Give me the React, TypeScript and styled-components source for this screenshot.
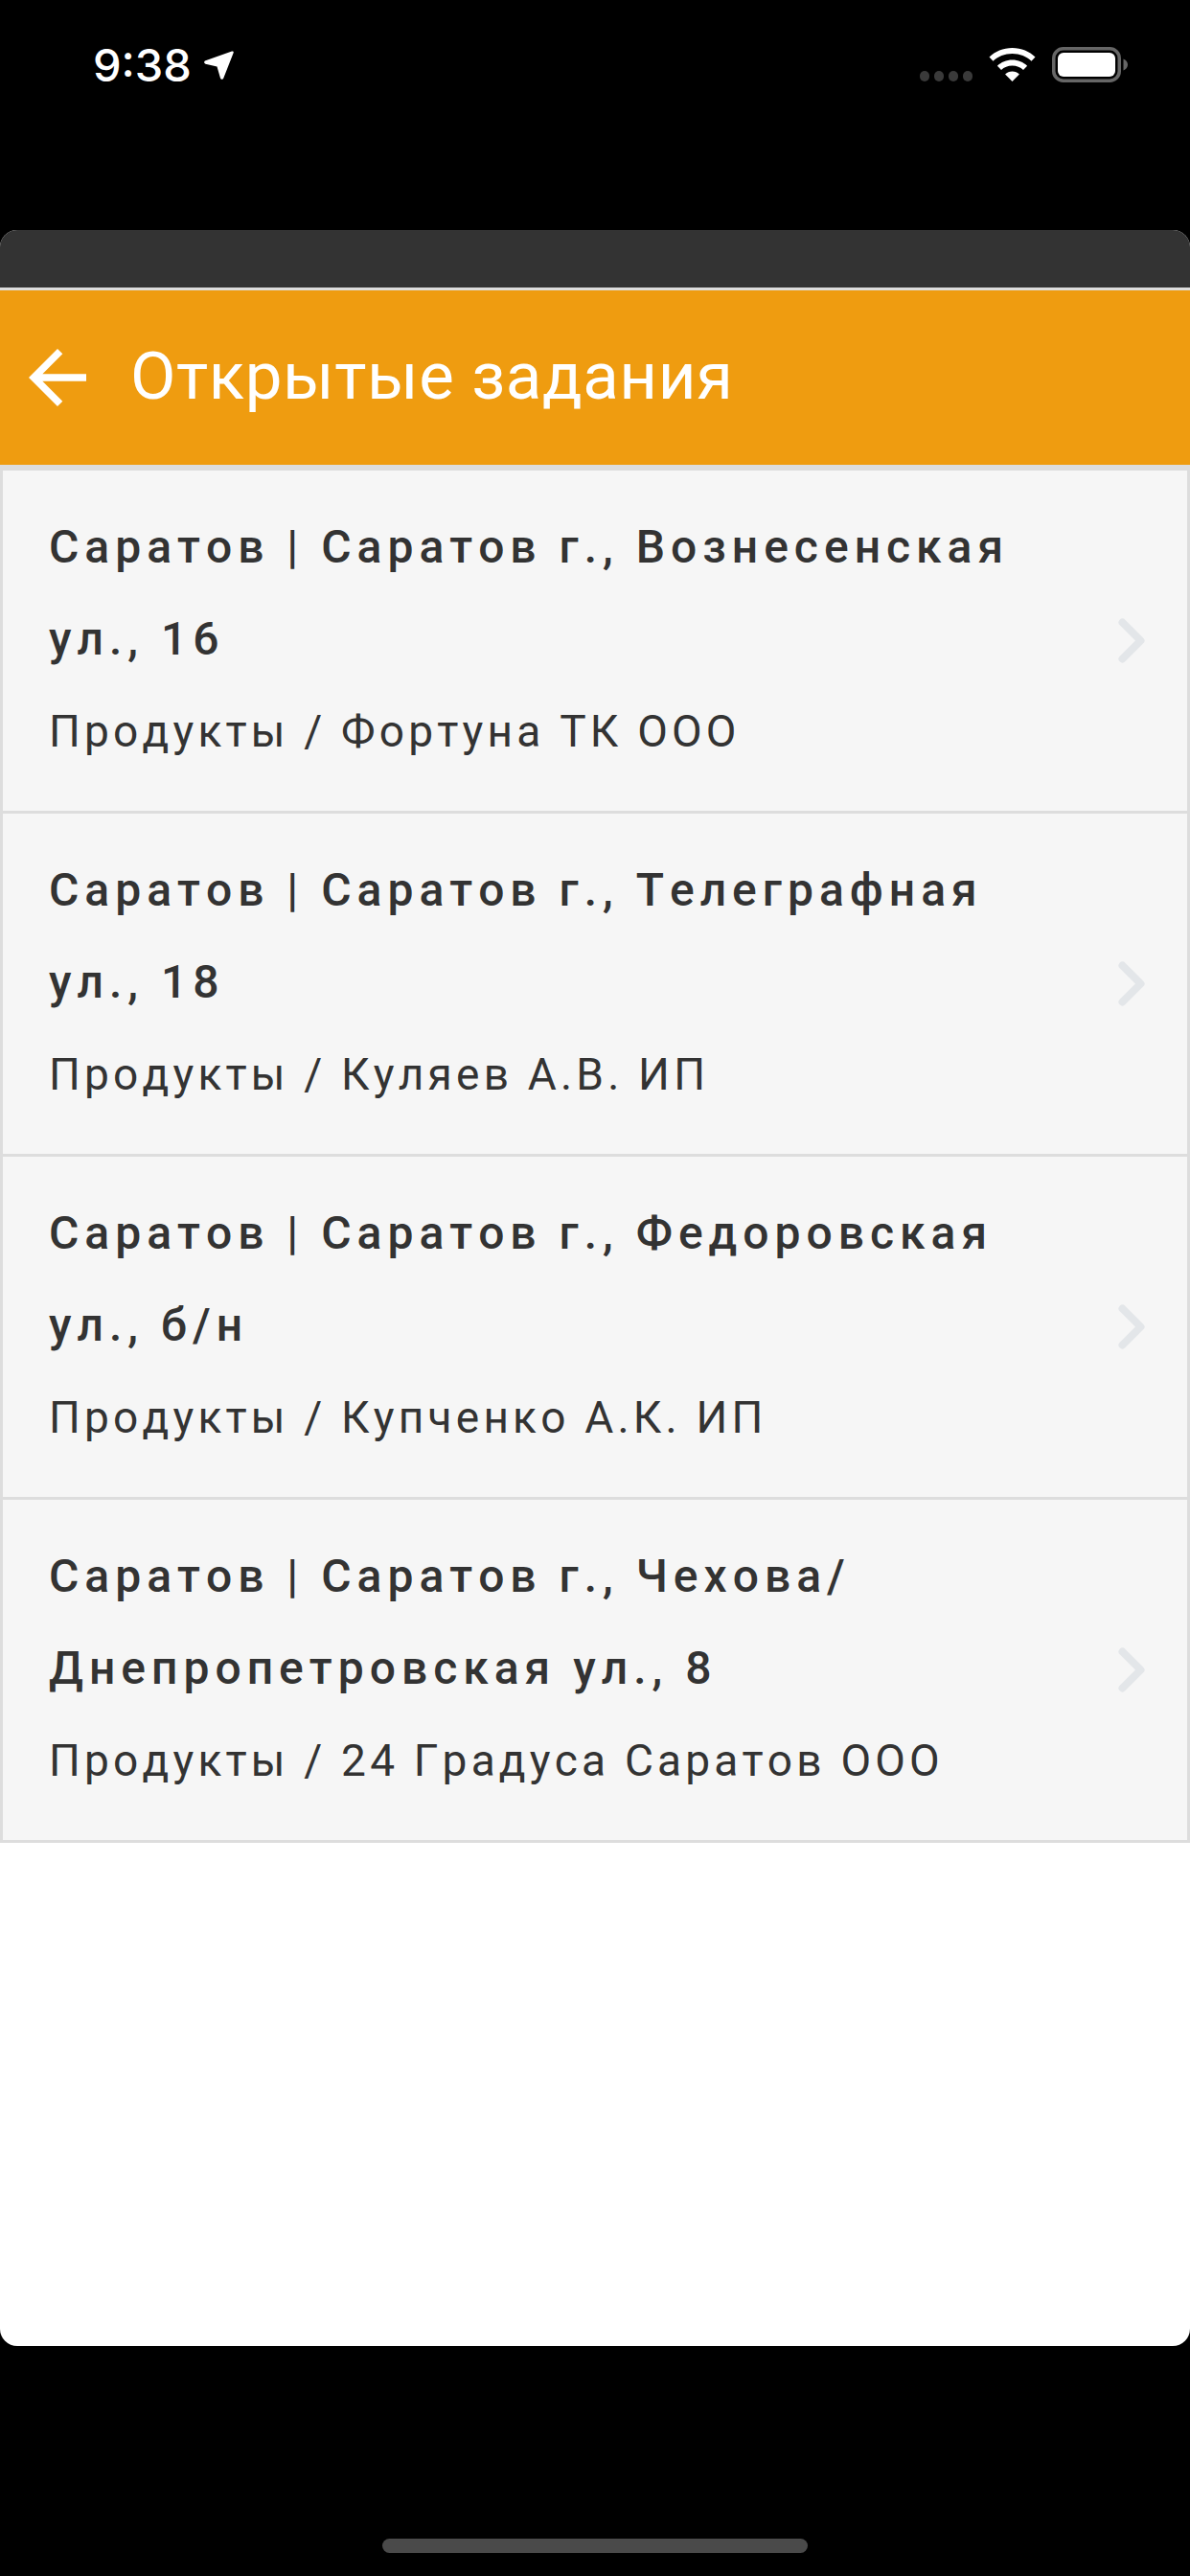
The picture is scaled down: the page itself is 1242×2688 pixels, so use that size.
import React from 'react';
import styled, { createGlobalStyle } from 'styled-components';

type Task = {
  lines: string[];
  subtitle: string;
};

const tasks: Task[] = [
  {
    lines: ['Саратов | Саратов г., Вознесенская', 'ул., 16'],
    subtitle: 'Продукты / Фортуна ТК ООО',
  },
  {
    lines: ['Саратов | Саратов г., Телеграфная', 'ул., 18'],
    subtitle: 'Продукты / Куляев А.В. ИП',
  },
  {
    lines: ['Саратов | Саратов г., Федоровская', 'ул., б/н'],
    subtitle: 'Продукты / Купченко А.К. ИП',
  },
  {
    lines: ['Саратов | Саратов г., Чехова/', 'Днепропетровская ул., 8'],
    subtitle: 'Продукты / 24 Градуса Саратов ООО',
  },
];

const GlobalStyle = createGlobalStyle`
  html, body {
    margin: 0;
    padding: 0;
    background: #000;
  }
`;

const Page = styled.div`
  width: 1242px;
  height: 2688px;
  background: #000;
  display: flex;
  flex-direction: column;
  overflow: hidden;
`;

const StatusBar = styled.div`
  height: 240px;
  box-sizing: border-box;
  padding: 46px 65px 0 97px;
  display: flex;
  justify-content: space-between;
  align-items: flex-start;
  color: #fff;
`;

const TimeGroup = styled.div`
  display: flex;
  align-items: center;
  gap: 13px;
`;

const Time = styled.span`
  font-family: 'Inter', 'Liberation Sans', sans-serif;
  font-size: 47px;
  line-height: 44px;
  font-weight: 500;
  letter-spacing: 0;
`;

const StatusIcons = styled.div`
  display: flex;
  align-items: flex-end;
  gap: 17px;
  padding-top: 3px;
`;

const SignalDots = styled.div`
  display: flex;
  gap: 5px;
  margin-bottom: 1px;
`;

const SignalDot = styled.span`
  width: 10px;
  height: 11px;
  border-radius: 5px;
  background: #3a3a3a;
`;

const WifiSlot = styled.div`
  display: flex;
  margin-bottom: 1px;
`;

const Card = styled.div`
  height: 2208px;
  background: #fff;
  border-radius: 18px;
  overflow: hidden;
`;

const TopStrip = styled.div`
  height: 60px;
  background: #333;
  border-bottom: 3px solid #ddd;
`;

const Header = styled.div`
  height: 182px;
  background: #ef9c10;
  border-bottom: 3px solid #ddd;
  display: flex;
  align-items: center;
  padding-left: 15px;
  color: #fff;
`;

const Title = styled.h1`
  margin: 0 0 3px 31px;
  font-family: 'Roboto', sans-serif;
  font-size: 69px;
  font-weight: 400;
  letter-spacing: 0.6px;
  line-height: 1;
`;

const List = styled.div`
  border-top: 3px solid #ddd;
`;

const Item = styled.div`
  background: #f6f6f6;
  border: 3px solid #ddd;
  border-top: 0;
  display: flex;
  align-items: center;
  justify-content: space-between;
  padding: 0 44px 4px 48px;
  height: 351px;
`;

const ItemText = styled.div`
  font-family: 'Roboto', sans-serif;
  color: #333;
  font-kerning: none;
`;

const ItemLine = styled.div`
  font-size: 48px;
  font-weight: 500;
  letter-spacing: 6px;
  line-height: 96px;
  white-space: nowrap;
`;

const ItemSubtitle = styled.div`
  font-size: 46px;
  font-weight: 400;
  letter-spacing: 4.2px;
  line-height: 96px;
  white-space: nowrap;
`;

const ChevronSlot = styled.div`
  display: flex;
  margin-top: 4px;
`;

const HomeBar = styled.div`
  width: 444px;
  height: 15px;
  margin: 201px auto 0;
  border-radius: 8px;
  background: #4a4a4a;
`;

const Chevron = () => (
  <svg width="28" height="47" viewBox="0 0 28 47" fill="none">
    <path d="M4.500 4.500L23.500 23.500L4.500 42.500" stroke="#e3e6e9" strokeWidth="8" strokeLinecap="round" strokeLinejoin="round" />
  </svg>
);

const BackArrow = () => (
  <svg width="90" height="90" viewBox="0 0 24 24" fill="#fff">
    <path d="M20 11H7.830l5.590-5.590L12 4l-8 8 8 8 1.410-1.410L7.830 13H20v-2z" />
  </svg>
);

const LocationArrow = () => (
  <svg width="31" height="30" viewBox="0 0 31 30" fill="#fff">
    <path d="M29 .5L1.500 10.300c-1.800.7-1.800 2.900 0 3.400L13.500 16.500 17 28.500c.5 1.700 2.700 1.700 3.300 0L30.700 2c.4-1-.6-1.900-1.700-1.500z" />
  </svg>
);

const Wifi = () => (
  <svg width="49" height="35" viewBox="0 0 49 35" fill="#fff">
    <path d="M24.500 0C15 0 6.600 3.600.5 9.500l4 4.300C9.500 9 16.600 6 24.500 6s15 3 20 7.800l4-4.300C42.400 3.600 34 0 24.500 0z" />
    <path d="M24.500 12.500c-6.100 0-11.600 2.400-15.600 6.200l4.100 4.300c3-2.800 7-4.500 11.500-4.500s8.500 1.700 11.500 4.500l4.100-4.300c-4-3.800-9.500-6.200-15.600-6.200z" />
    <path d="M24.500 24.500c-2.900 0-5.500 1.100-7.400 3l7.400 7.500 7.400-7.500c-1.900-1.900-4.500-3-7.400-3z" />
  </svg>
);

const Battery = () => (
  <svg width="79" height="37" viewBox="0 0 79 37" fill="none">
    <rect x="1.750" y="1.750" width="68.500" height="33.500" rx="10" stroke="#666" strokeWidth="3.500" />
    <rect x="6" y="6" width="60" height="25" rx="6" fill="#fff" />
    <path d="M74.500 12.500c2.500 1 4.500 3.300 4.500 6s-2 5-4.500 6z" fill="#666" />
  </svg>
);

const App = () => {
  return (
    <Page>
      <GlobalStyle />
      <StatusBar>
        <TimeGroup>
          <Time>9:38</Time>
          <LocationArrow />
        </TimeGroup>
        <StatusIcons>
          <SignalDots>
            {[0, 1, 2, 3].map((i: number) => (
              <SignalDot key={i} />
            ))}
          </SignalDots>
          <WifiSlot>
            <Wifi />
          </WifiSlot>
          <Battery />
        </StatusIcons>
      </StatusBar>
      <Card>
        <TopStrip />
        <Header>
          <BackArrow />
          <Title>Открытые задания</Title>
        </Header>
        <List>
          {tasks.map((task, i: number) => (
            <Item key={i}>
              <ItemText>
                {task.lines.map((line) => (
                  <ItemLine key={line}>{line}</ItemLine>
                ))}
                <ItemSubtitle>{task.subtitle}</ItemSubtitle>
              </ItemText>
              <ChevronSlot>
                <Chevron />
              </ChevronSlot>
            </Item>
          ))}
        </List>
      </Card>
      <HomeBar />
    </Page>
  );
};

export default App;
